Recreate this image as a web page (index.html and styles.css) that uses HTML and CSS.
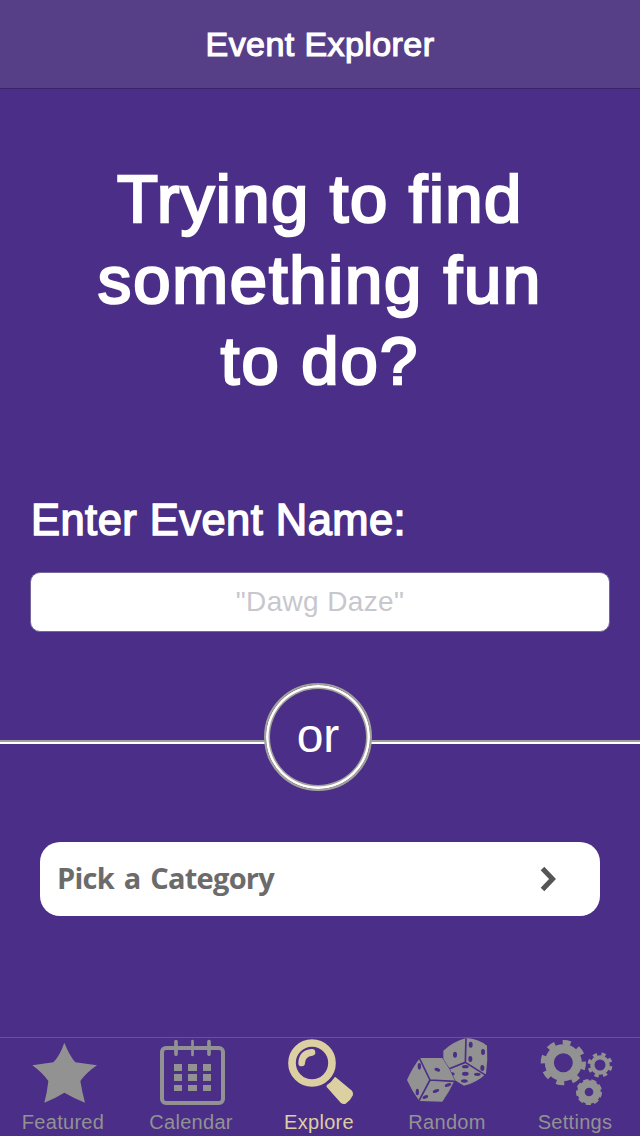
FILE: index.html
```html
<!DOCTYPE html>
<html lang="en">
<head>
<meta charset="utf-8">
<title>Event Explorer</title>
<link rel="stylesheet" href="styles.css">
</head>
<body>
<div class="app">
  <header class="navbar"><h1 class="navbar-title">Event Explorer</h1></header>
  <main class="content">
    <h2 class="headline">
      <span class="row row-1">Trying to find</span>
      <span class="row row-2">something fun</span>
      <span class="row row-3">to do?</span>
    </h2>
    <label class="field-label" for="event-name">Enter Event Name:</label>
    <input class="field" id="event-name" type="text" placeholder='"Dawg Daze"'>
    <div class="divider"><span class="divider-badge">or</span></div>
    <button class="category" type="button">
      <span class="category-text">Pick a Category</span>
      <svg class="chevron" viewBox="0 0 20 30"><path d="M4.500 4.500L14.500 15L4.500 25.500"/></svg>
    </button>
  </main>
  <nav class="tabbar">
    <a class="tab">
      <svg class="icon" viewBox="0 24 384 216"><path d="M193 38Q208 76 226 97L291 106Q260 127 241 153Q246 184 255 218Q222 205 193 188Q166 205 133 218Q142 184 145 153Q126 127 97 106L160 97Q180 76 193 38Z"/></svg>
      <span class="tab-label">Featured</span>
    </a>
    <a class="tab">
      <svg class="icon" viewBox="-6 24 384 216">
        <rect class="line" x="96" y="54" width="183" height="165" rx="12" stroke-width="12"/>
        <path class="line" d="M138 35v38M237 35v38" stroke-width="11" stroke-linecap="round"/>
        <path class="line" d="M187.500 33v42" stroke-width="8" stroke-linecap="round"/>
        <path d="M132 102h24v21h-24zM174 102h27v21h-27zM219 102h24v21h-24zM132 132h24v21h-24zM174 132h27v21h-27zM219 132h24v21h-24zM132 165h24v18h-24zM174 165h27v18h-27zM219 165h24v18h-24z"/>
      </svg>
      <span class="tab-label">Calendar</span>
    </a>
    <a class="tab active">
      <svg class="icon" viewBox="-12 24 384 216">
        <circle class="line" cx="156" cy="99" r="60" stroke-width="23"/>
        <path class="line" d="M125 99Q126 70 156 67" stroke-width="20" stroke-linecap="round"/>
        <path d="M224 142Q226 140 229 143L276 182Q280 187 279 195Q272 211 257 221Q249 224 242 218L200 171Q198 168 201 165Q215 156 224 142Z"/>
      </svg>
      <span class="tab-label">Explore</span>
    </a>
    <a class="tab">
      <svg class="icon" viewBox="-18 24 384 216">
        <path d="M160 62Q190 34 229 24Q264 26 291 47Q294 90 288 131Q260 158 222 167L195 151L178 115L160 91Z"/>
        <path class="cut" d="M228 25L226 97L178 116M226 97L288 136"/>
        <g class="pip"><ellipse cx="195" cy="74" rx="6" ry="9"/><ellipse cx="242" cy="44" rx="6" ry="9"/><ellipse cx="279" cy="66" rx="6" ry="9"/><ellipse cx="241" cy="87" rx="6" ry="9"/><ellipse cx="277" cy="114" rx="6" ry="9"/><ellipse cx="226" cy="110" rx="10" ry="5"/><ellipse cx="226" cy="131" rx="10" ry="6"/><ellipse cx="223" cy="153" rx="10" ry="5"/><ellipse cx="262" cy="133" rx="10" ry="5"/><ellipse cx="187" cy="132" rx="7" ry="5"/></g>
        <path class="outlined" d="M90 84L157 84Q179 114 194 151Q178 186 157 215L88 213Q66 184 51 150Q67 113 90 84Z"/>
        <path class="cut" d="M88 84L120 150L194 154M120 150L86 214"/>
        <g class="pip"><ellipse cx="142" cy="119" rx="9" ry="5" transform="rotate(20 142 119)"/><ellipse cx="88" cy="109" rx="5" ry="10"/><ellipse cx="82" cy="186" rx="5" ry="10"/><ellipse cx="174" cy="165" rx="10" ry="5" transform="rotate(-20 174 165)"/><ellipse cx="138" cy="183" rx="10" ry="5" transform="rotate(-20 138 183)"/><ellipse cx="106" cy="201" rx="9" ry="5" transform="rotate(-20 106 201)"/></g>
      </svg>
      <span class="tab-label">Random</span>
    </a>
    <a class="tab">
      <svg class="icon" viewBox="-24 24 384 216">
        <g class="line">
          <circle cx="130" cy="98" r="42" stroke-width="27"/>
          <circle cx="130" cy="98" r="61" stroke-width="14" pathLength="80" stroke-dasharray="5 5" transform="rotate(-3 130 98)"/>
          <circle cx="240" cy="105" r="23" stroke-width="13"/>
          <circle cx="240" cy="105" r="32.500" stroke-width="10" pathLength="80" stroke-dasharray="5 5" transform="rotate(6 240 105)"/>
          <circle cx="207" cy="186" r="24" stroke-width="22"/>
          <circle cx="207" cy="186" r="36" stroke-width="6" pathLength="90" stroke-dasharray="6.500 3.500"/>
        </g>
      </svg>
      <span class="tab-label">Settings</span>
    </a>
  </nav>
</div>
</body>
</html>
```
FILE: styles.css
```css
* { box-sizing: border-box; }
body { margin: 0; font-family: "Liberation Sans", Arial, sans-serif; }
.app { width: 640px; height: 1136px; display: flex; flex-direction: column; background: #4b2e87; color: #fff; overflow: hidden; }
.navbar { height: 89px; flex: none; background: #573f88; border-bottom: 1px solid #3a2568; }
.navbar-title { margin: 0; font-size: 34px; line-height: 88px; font-weight: 400; letter-spacing: .42px; text-align: center; -webkit-text-stroke: 1.200px #fff; }
.content { flex: 1; display: flex; flex-direction: column; }
.headline { margin: 69px 0 0; font-size: 67px; line-height: 81px; font-weight: 400; text-align: center; -webkit-text-stroke: 2.500px #fff; }
.row { display: block; }
.row-1 { letter-spacing: 1.500px; }
.row-2 { letter-spacing: 1.800px; }
.row-3 { letter-spacing: 2px; }
.field-label { margin: 93px 0 0 31px; font-size: 43.500px; line-height: 52px; letter-spacing: .45px; -webkit-text-stroke: 1.500px #fff; }
.field { width: 580px; height: 60px; margin: 26px 0 0 30px; padding: 0 0 1px; border: 1px solid #776699; border-radius: 10px; background: #fff; font: 28px "Liberation Sans", Arial, sans-serif; letter-spacing: .35px; text-align: center; color: #333; }
.field::placeholder { color: #c7c7cd; opacity: 1; }
.divider { position: relative; height: 4px; margin-top: 108px; border-top: 2px solid #a09e9e; border-bottom: 2px solid #fff; }
.divider-badge { position: absolute; left: 264px; top: -59px; width: 108px; height: 108px; border-radius: 50%; background: #4b2e87; border: 2px solid #a3a19b; box-shadow: inset 0 0 0 2.500px #fff, inset 0 0 0 4px #a3a19b; font-size: 48px; line-height: 102px; text-align: center; }
.category { display: flex; align-items: center; justify-content: space-between; width: 560px; height: 74px; margin: 98px 0 0 40px; padding: 0 42px 0 17px; border: 0; border-radius: 20px; background: #fff; }
.category-text { padding-bottom: 3px; font: 700 29px/40px "Open Sans", "Noto Sans", sans-serif; color: #6b6b6b; letter-spacing: -.75px; word-spacing: 3px; }
.chevron { width: 20px; height: 30px; fill: none; stroke: #555; stroke-width: 5; }
.tabbar { display: grid; grid-template-columns: repeat(5, 128px); height: 99px; flex: none; border-top: 1px solid #69509c; }
.tab { display: flex; flex-direction: column; color: #929292; }
.tab.active { color: #dccfa1; }
.icon { display: block; width: 128px; height: 72px; fill: currentColor; }
.line { fill: none; stroke: currentColor; }
.pip { fill: #4b2e87; }
.cut { fill: none; stroke: #4b2e87; stroke-width: 5; }
.outlined { stroke: #4b2e87; stroke-width: 3; paint-order: stroke; }
.tab-label { padding-right: 2px; font-size: 20px; line-height: 24px; letter-spacing: .3px; text-align: center; }
```
